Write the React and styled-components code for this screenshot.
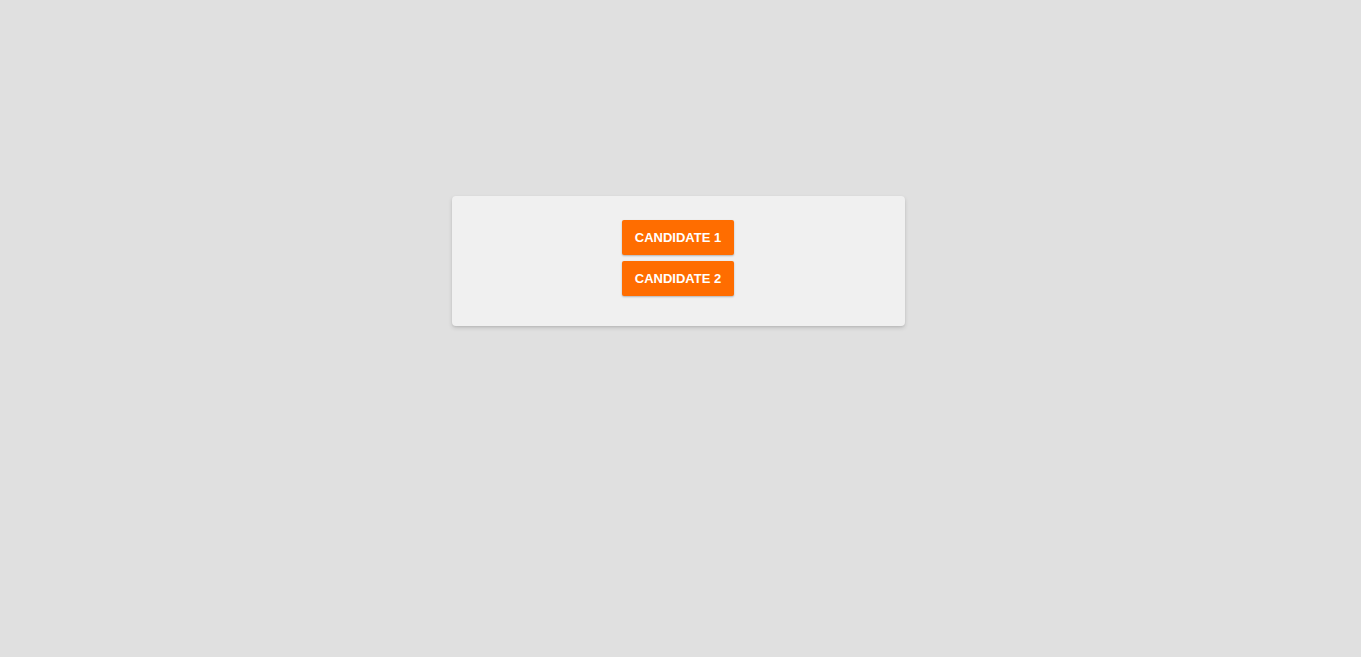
import React from "react";
import styled, { createGlobalStyle } from "styled-components";

const Global = createGlobalStyle`
  html, body { margin: 0; padding: 0; background: #e0e0e0; }
  body { font-family: "Liberation Sans", Arial, sans-serif; }
`;

const Page = styled.div`
  min-height: 657px;
  display: flex;
  justify-content: center;
  align-items: flex-start;
  padding-top: 196px;
  padding-right: 4px;
  box-sizing: border-box;
`;

const Card = styled.div`
  width: 453px;
  box-sizing: border-box;
  background: #f0f0f0;
  border-radius: 4px;
  box-shadow: 0 2px 4px rgba(0, 0, 0, 0.14), 0 1px 2px rgba(0, 0, 0, 0.06);
  padding: 24px 1px 30px 0;
  display: flex;
  flex-direction: column;
  align-items: center;
  gap: 6px;
`;

const Button = styled.button`
  width: 112px;
  height: 35px;
  border: none;
  border-radius: 2px;
  background: #ff6d00;
  color: #ffffff;
  font-family: "Liberation Sans", Arial, sans-serif;
  font-weight: 700;
  font-size: 13px;
  letter-spacing: 0;
  text-transform: uppercase;
  box-shadow: 0 1px 2px rgba(0, 0, 0, 0.25);
  cursor: pointer;
  padding: 0;
`;

export default function App() {
  return (
    <>
      <Global />
      <Page>
        <Card>
          <Button>Candidate 1</Button>
          <Button>Candidate 2</Button>
        </Card>
      </Page>
    </>
  );
}
